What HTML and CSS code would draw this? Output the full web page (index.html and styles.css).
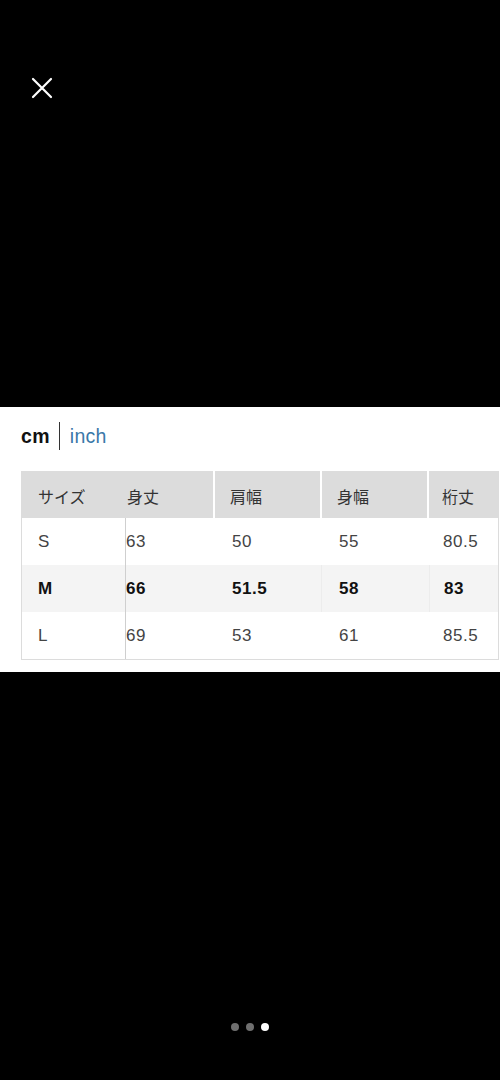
FILE: index.html
```html
<!DOCTYPE html>
<html lang="ja">
<head>
    <meta charset="UTF-8">
    <meta name="viewport" content="width=device-width, initial-scale=1.0">
    <title>サイズ表</title>
    <link rel="stylesheet" href="styles.css">
</head>
<body>
    <div class="viewer">
        <button class="close-btn" aria-label="閉じる">
            <svg width="22" height="22" viewBox="0 0 22 22">
                <path d="M2 2 L20 20 M20 2 L2 20" stroke="#fff" stroke-width="2.2" stroke-linecap="round" fill="none"/>
            </svg>
        </button>

        <div class="slide">
            <div class="unit-switch">
                <span class="unit active">cm</span>
                <span class="unit-divider"></span>
                <span class="unit link">inch</span>
            </div>

            <div class="size-table">
                <div class="cell head first">サイズ</div>
                <div class="cell head col2">身丈</div>
                <div class="cell head">肩幅</div>
                <div class="cell head">身幅</div>
                <div class="cell head last">桁丈</div>

                <div class="cell first">S</div>
                <div class="cell col2">63</div>
                <div class="cell">50</div>
                <div class="cell">55</div>
                <div class="cell last">80.5</div>

                <div class="cell first strong shade">M</div>
                <div class="cell col2 strong shade">66</div>
                <div class="cell strong shade sep">51.5</div>
                <div class="cell strong shade">58</div>
                <div class="cell last strong shade sepl">83</div>

                <div class="cell first">L</div>
                <div class="cell col2">69</div>
                <div class="cell">53</div>
                <div class="cell">61</div>
                <div class="cell last">85.5</div>
            </div>
        </div>

        <div class="dots">
            <span class="dot"></span>
            <span class="dot"></span>
            <span class="dot on"></span>
        </div>
    </div>
</body>
</html>
```

FILE: styles.css
```css
/* Size chart viewer */
body {
    margin: 0;
    padding: 0;
    background-color: #000;
    font-family: "Liberation Sans", "Noto Sans CJK JP", sans-serif;
    color: #333;
}

.viewer {
    width: 500px;
    height: 1080px;
    display: flex;
    flex-direction: column;
}

.close-btn {
    width: 22px;
    height: 22px;
    margin: 77px 0 0 31px;
    padding: 0;
    border: none;
    background: none;
    display: flex;
}

.slide {
    margin-top: 308px;
    background-color: #fff;
    padding: 15px 0 12px 21px;
}

.unit-switch {
    display: flex;
    align-items: center;
    height: 28px;
    font-size: 19.5px;
    letter-spacing: 0.3px;
}

.unit.active {
    color: #111;
    font-weight: 600;
}

.unit-divider {
    width: 1px;
    height: 28px;
    background-color: #333;
    margin: 0 10px 0 9px;
}

.unit.link {
    color: #3a78a8;
}

.size-table {
    margin-top: 21px;
    width: 478px;
    box-sizing: border-box;
    border: 1px solid #dcdcdc;
    border-top: none;
    display: grid;
    grid-template-columns: 104px 89px 107px 107px 1fr;
    grid-auto-rows: 47px;
}

.cell {
    display: flex;
    align-items: center;
    padding-left: 17px;
    font-size: 17px;
    letter-spacing: 0.5px;
    color: #444;
}

.cell.head {
    background-color: #dcdcdc;
    font-size: 16px;
    letter-spacing: 0;
    color: #333;
    border-right: 2px solid #fff;
    padding-left: 15px;
    padding-top: 2px;
}

.cell.head.first {
    border-right: none;
    padding-left: 16px;
}

.cell.head.last {
    border-right: none;
}

.cell.first {
    border-right: 1px solid #cfcfcf;
    padding-left: 16px;
}

.cell.col2 {
    padding-left: 0;
}

.cell.head.col2 {
    padding-left: 1px;
}

.cell.last {
    padding-left: 14px;
}

.cell.head.last {
    padding-left: 13px;
}

.cell.shade {
    background-color: #f4f4f4;
}

.cell.sep {
    border-right: 1px solid #ececec;
}

.cell.sepl {
    border-left: 1px solid #ececec;
}

.cell.strong {
    font-weight: 700;
    color: #111;
}

.dots {
    margin-top: auto;
    margin-bottom: 49px;
    display: flex;
    justify-content: center;
    gap: 7px;
}

.dot {
    width: 8px;
    height: 8px;
    border-radius: 50%;
    background-color: #6f6f6f;
}

.dot.on {
    background-color: #fff;
}
```
